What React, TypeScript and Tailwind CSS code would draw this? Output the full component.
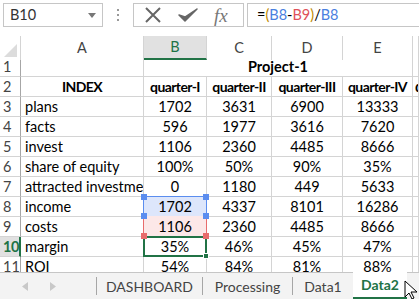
import React from 'react';

const cols = ['A', 'B', 'C', 'D', 'E', ''];

const rows: { label: string; values: string[] }[] = [
  { label: 'plans', values: ['1702', '3631', '6900', '13333'] },
  { label: 'facts', values: ['596', '1977', '3616', '7620'] },
  { label: 'invest', values: ['1106', '2360', '4485', '8666'] },
  { label: 'share of equity', values: ['100%', '50%', '90%', '35%'] },
  { label: 'attracted investment', values: ['0', '1180', '449', '5633'] },
  { label: 'income', values: ['1702', '4337', '8101', '16286'] },
  { label: 'costs', values: ['1106', '2360', '4485', '8666'] },
  { label: 'margin', values: ['35%', '46%', '45%', '47%'] },
  { label: 'ROI', values: ['54%', '84%', '81%', '88%'] },
];

const grid = 'grid grid-cols-[21px_123px_63px_65px_71px_70px_1fr]';

function RowHead({ n, active }: { n: number; active?: boolean }) {
  return (
    <div
      className={
        'h-5 flex items-center pl-[3px] border-b border-[#d4d4d4] ' +
        (active
          ? 'bg-[#e1e1e1] text-[#217346] font-bold tracking-[-0.5px] border-r-2 border-r-[#217346]'
          : 'bg-white text-[#444] border-r border-r-[#a6a6a6]')
      }
    >
      {n}
    </div>
  );
}

function Cell({ children, className = '' }: { children?: React.ReactNode; className?: string }) {
  return (
    <div className={'relative h-5 flex items-center border-r border-b border-[#d4d4d4] whitespace-nowrap ' + className}>
      {children}
    </div>
  );
}

function Corner({ pos, color }: { pos: string; color: string }) {
  return <span className={'absolute w-[6px] h-[6px] z-20 ' + pos + ' ' + color} />;
}

const head = 'justify-center font-bold tracking-[-0.6px] text-[14px]';

export default function App() {
  return (
    <div
      className="w-[419px] h-[299px] overflow-hidden bg-white text-[14.5px] text-black relative"
      style={{ fontFamily: 'Lato, "Open Sans", sans-serif' }}
    >
      {/* formula bar */}
      <div className="h-[36px] flex items-start pt-[3px] pl-[3px]">
        <div className="w-[100px] h-[24px] border border-[#c6c6c6] flex items-center justify-between pl-[6px] pr-[6px] text-[#333]">
          <span>B10</span>
          <svg width="8" height="5" viewBox="0 0 8 5">
            <path d="M0 0h8L4 5z" fill="#777" />
          </svg>
        </div>
        <div className="w-[30px] h-[24px] flex flex-col items-center justify-center gap-[3px]">
          <span className="w-[2px] h-[2px] bg-[#999]" />
          <span className="w-[2px] h-[2px] bg-[#999]" />
          <span className="w-[2px] h-[2px] bg-[#999]" />
        </div>
        <div className="w-[111px] h-[24px] border border-[#c6c6c6] flex items-center pl-[10px] gap-[16px]">
          <svg width="18" height="16" viewBox="0 0 18 16">
            <path d="M2 1L16 15M16 1L2 15" stroke="#666" strokeWidth="2" fill="none" />
          </svg>
          <svg width="20" height="16" viewBox="0 0 20 16">
            <path d="M1 8l6 6L19 2l-12 8z" fill="#666" stroke="#666" strokeWidth="1.5" strokeLinejoin="round" />
          </svg>
          <span className="text-[#777] italic text-[19px] leading-none" style={{ fontFamily: '"Liberation Serif", serif' }}>
            fx
          </span>
        </div>
        <div className="flex-1 h-[24px] ml-[3px] border border-r-0 border-[#c6c6c6] flex items-center pl-[9px]">
          <span>=</span>
          <span className="text-[#c08a00]">(</span>
          <span className="text-[#4a7fe0]">B8</span>
          <span>-</span>
          <span className="text-[#e0525a]">B9</span>
          <span className="text-[#c08a00]">)</span>
          <span>/</span>
          <span className="text-[#4a7fe0]">B8</span>
        </div>
      </div>

      {/* sheet */}
      <div className="h-[236px] overflow-hidden">
        <div className={grid + ' h-[21px] border-b border-[#ababab] text-[#444]'}>
          <div className="relative border-r border-[#d4d4d4] bg-white">
            <svg className="absolute right-[3px] bottom-[3px]" width="13" height="13" viewBox="0 0 13 13">
              <path d="M13 0V13H0z" fill="#dcdcdc" />
            </svg>
          </div>
          {cols.map((c, i) => (
            <div
              key={i}
              className={
                'flex items-center justify-center border-r border-[#d4d4d4] ' +
                (c === 'B' ? 'bg-[#e1e1e1] text-[#217346] border-b-2 border-b-[#217346]' : 'bg-white')
              }
            >
              {c}
            </div>
          ))}
        </div>

        <div className={grid}>
          <RowHead n={1} />
          <Cell />
          <div className="col-span-4 h-5 flex items-center justify-center font-bold border-r border-b border-[#d4d4d4]">
            Project-1
          </div>
          <Cell />

          <RowHead n={2} />
          <Cell className={head}>INDEX</Cell>
          <Cell className={head}>quarter-I</Cell>
          <Cell className={head}>quarter-II</Cell>
          <Cell className={head}>quarter-III</Cell>
          <Cell className={head}>quarter-IV</Cell>
          <Cell className="font-bold pl-[2px] overflow-hidden">q</Cell>

          {rows.map((r, i) => {
            const n = i + 3;
            return (
              <React.Fragment key={n}>
                <RowHead n={n} active={n === 10} />
                <Cell className="pl-1 overflow-hidden">{r.label}</Cell>
                {r.values.map((v, j) => {
                  if (j === 0 && n === 8)
                    return (
                      <Cell key={j} className="justify-center">
                        <div className="absolute -left-px -top-px w-[64px] h-[21px] border-[1.5px] border-[#5b8def] bg-[#dde6fb] z-10" />
                        <Corner pos="-left-[3px] -top-[3px]" color="bg-[#5b8def]" />
                        <Corner pos="-right-[3px] -top-[3px]" color="bg-[#5b8def]" />
                        <Corner pos="-left-[3px] -bottom-[3px]" color="bg-[#5b8def]" />
                        <Corner pos="-right-[3px] -bottom-[3px]" color="bg-[#5b8def]" />
                        <span className="relative z-10">{v}</span>
                      </Cell>
                    );
                  if (j === 0 && n === 9)
                    return (
                      <Cell key={j} className="justify-center">
                        <div className="absolute -left-px -top-px w-[64px] h-[21px] border-[1.5px] border-t-0 border-[#e86c6c] bg-[#fce8e8] z-10" />
                        <Corner pos="-left-[3px] -bottom-[3px]" color="bg-[#e86c6c]" />
                        <Corner pos="-right-[3px] -bottom-[3px]" color="bg-[#e86c6c]" />
                        <span className="relative z-10">{v}</span>
                      </Cell>
                    );
                  if (j === 0 && n === 10)
                    return (
                      <Cell key={j} className="justify-center">
                        <div className="absolute -left-px -top-px w-[64px] h-[21px] border-2 border-[#217346] z-10" />
                        <span className="absolute -right-[3px] -bottom-[3px] w-[6px] h-[6px] bg-[#217346] border border-white z-20" />
                        <span className="relative z-10">{v}</span>
                      </Cell>
                    );
                  return (
                    <Cell key={j} className="justify-center">
                      {v}
                    </Cell>
                  );
                })}
                <Cell />
              </React.Fragment>
            );
          })}
        </div>
      </div>

      {/* sheet tabs */}
      <div className="h-[27px] flex items-stretch bg-[#f3f3f3] border-t border-[#c6c6c6] text-[#444] text-[14px]">
        <div className="w-[96px] flex items-center pl-[22px] gap-[22px]">
          <svg width="6" height="9" viewBox="0 0 6 9">
            <path d="M6 0v9L0 4.5z" fill="#c8c8c8" />
          </svg>
          <svg width="6" height="9" viewBox="0 0 6 9">
            <path d="M0 0v9l6-4.5z" fill="#c8c8c8" />
          </svg>
        </div>
        <div className="w-px bg-[#a6a6a6] my-[4px]" />
        <div className="w-[105px] flex items-center justify-center">DASHBOARD</div>
        <div className="w-px bg-[#a6a6a6] my-[4px]" />
        <div className="w-[89px] flex items-center justify-center">Processing</div>
        <div className="w-px bg-[#a6a6a6] my-[4px]" />
        <div className="w-[60px] flex items-center justify-center">Data1</div>
        <div className="w-[54px] -mt-px flex items-center justify-center bg-white text-[#217346] font-bold border-b-2 border-[#217346]">
          Data2
        </div>
      </div>

      {/* mouse cursor */}
      <svg className="absolute left-[404px] top-[280px]" width="14" height="20" viewBox="0 0 14 20">
        <path d="M1 1v16l4-4 3 6 2-1-3-6h6z" fill="white" stroke="black" strokeWidth="1" />
      </svg>
    </div>
  );
}
